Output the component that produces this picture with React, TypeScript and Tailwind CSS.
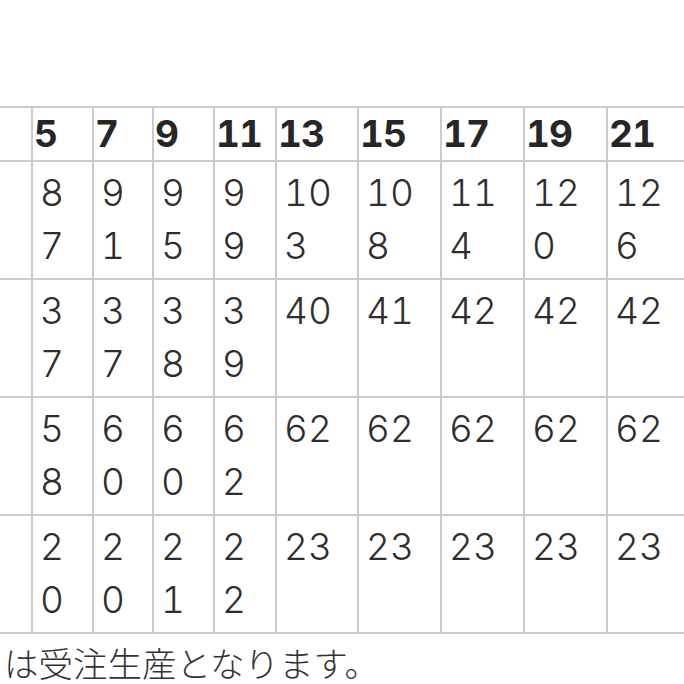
import React from "react";

const headers = ["", "5", "7", "9", "11", "13", "15", "17", "19", "21"];

const rows: string[][][] = [
  [[], ["8", "7"], ["9", "1"], ["9", "5"], ["9", "9"], ["10", "3"], ["10", "8"], ["11", "4"], ["12", "0"], ["12", "6"]],
  [[], ["3", "7"], ["3", "7"], ["3", "8"], ["3", "9"], ["40"], ["41"], ["42"], ["42"], ["42"]],
  [[], ["5", "8"], ["6", "0"], ["6", "0"], ["6", "2"], ["62"], ["62"], ["62"], ["62"], ["62"]],
  [[], ["2", "0"], ["2", "0"], ["2", "1"], ["2", "2"], ["23"], ["23"], ["23"], ["23"], ["23"]],
];

export default function App() {
  return (
    <div
      className="w-[684px] h-[684px] overflow-hidden bg-white text-[#333333]"
      style={{ fontFamily: 'Inter, "Noto Sans CJK JP", sans-serif' }}
    >
      <div className="h-[106px]" />
      <div className="grid w-[689px] grid-cols-[31px_59px_58px_59px_60px_80px_81px_81px_81px_81px] grid-rows-[52px_116px_116px_116px_116px] gap-[2px] bg-[#cbcbcb] py-[2px] tabular-nums">
        {headers.map((h, i) => (
          <div
            key={`h${i}`}
            className="bg-white pl-[1px] text-[37px] font-bold leading-[52px] tracking-[-1px] text-[#262626]"
          >
            {h}
          </div>
        ))}
        {rows.map((row, r) =>
          row.map((lines, c) => (
            <div
              key={`r${r}c${c}`}
              className="flex flex-col bg-white pl-[7px] pt-[4px] text-[37px] font-light leading-[53px] text-[#2e2e2e]"
            >
              {lines.map((l, k) => (
                <span key={k}>{l}</span>
              ))}
            </div>
          ))
        )}
      </div>
      <div
        className="pl-[4px] pt-[9px] text-[34.5px] font-light leading-[38px] text-[#333333]"
        style={{ fontFamily: '"Noto Sans CJK JP", sans-serif' }}
      >
        は受注生産となります。
      </div>
    </div>
  );
}
